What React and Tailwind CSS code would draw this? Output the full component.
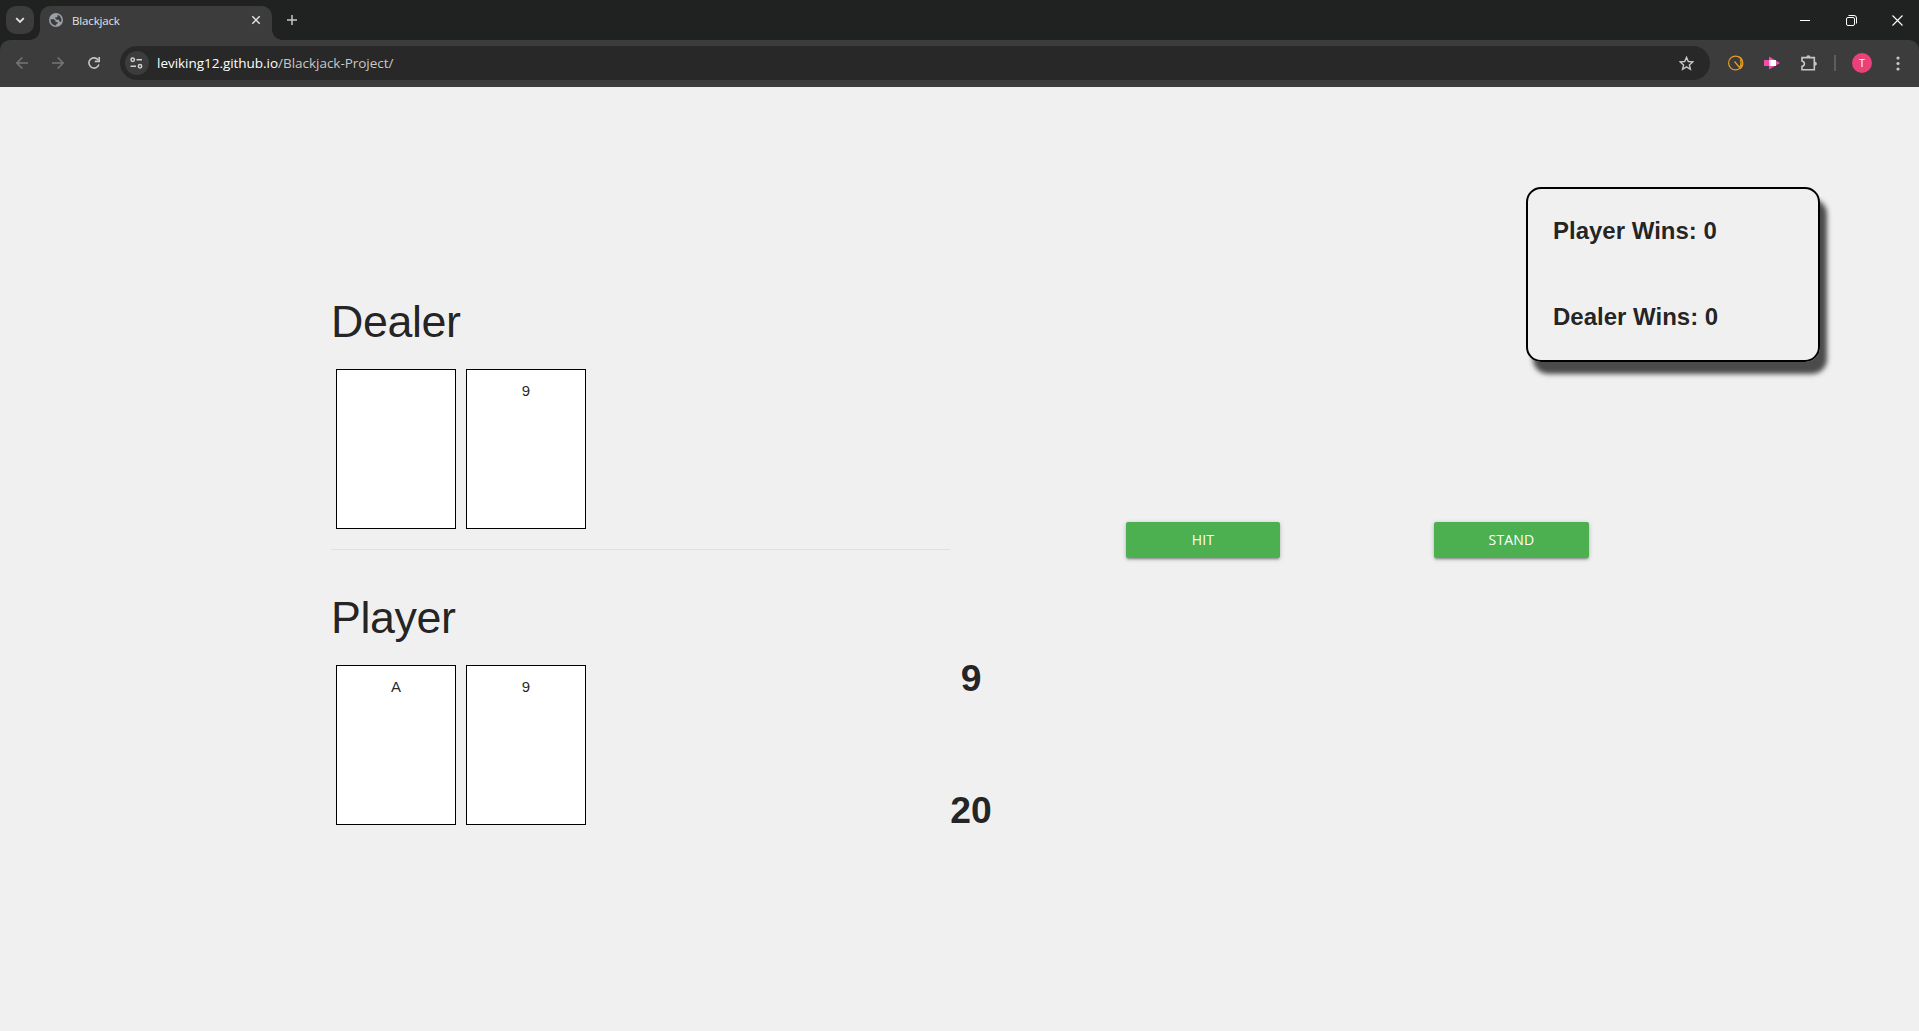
function GlobeIcon() {
  return (
    <svg className="size-[14px] shrink-0" viewBox="0 0 14 14">
      <circle cx="7" cy="7" r="7" fill="#9aa0a8" />
      <path d="M8.600 1.700C10.800 2.300 12.400 4.400 12.400 7c0 .7-.1 1.300-.3 1.900L10.300 8.200 9.900 6.800H7.700L6.300 5.600V4.300h1.900L8.600 3z" fill="#3c3c3c" />
      <path d="M1.600 6.200h3.200l1.700 1.400v1.300h2.100v1.500l-1.200.5-.2 1.500C4 12.500 1.500 10 1.500 7z" fill="#3c3c3c" />
    </svg>
  );
}

function ArrowIcon({ flip }) {
  return (
    <svg className={flip ? "size-[12px] shrink-0 rotate-180" : "size-[12px] shrink-0"} viewBox="0 0 12 12" fill="none" stroke="#767676" strokeWidth="1.5">
      <path d="M12 6H1M6.300.5L.9 6l5.400 5.500" />
    </svg>
  );
}

function Chrome() {
  return (
    <header className="h-[87px] bg-[#202221]">
      <div className="flex h-10 items-start">
        <div className="ml-[6px] mt-[6px] flex size-7 shrink-0 items-center justify-center rounded-[10px] bg-[#3c3c3c]">
          <svg className="size-[10px]" viewBox="0 0 10 10" fill="none" stroke="#e3e3e3" strokeWidth="1.8"><path d="M1.200 3.200L5 7l3.800-3.800" /></svg>
        </div>
        <div className="mt-[30px] ml-[-4px] size-[10px] shrink-0 bg-[radial-gradient(circle_at_0_0,transparent_9.500px,#3c3c3c_10px)]" />
        <div className="mt-[6px] flex h-[34px] w-[232px] shrink-0 items-center rounded-t-[10px] bg-[#3c3c3c] pb-[6px] pl-[9px] pr-[11px]">
          <GlobeIcon />
          <span className="ml-[9px] mt-[2px] flex-1 font-['Open_Sans',sans-serif] text-[11.500px] leading-4 tracking-[-0.15px] text-[#e3e3e3]">Blackjack</span>
          <svg className="size-[10px]" viewBox="0 0 10 10" stroke="#e3e3e3" strokeWidth="1.500"><path d="M1.300 1.300l7.400 7.400M8.700 1.300L1.300 8.700" /></svg>
        </div>
        <div className="mt-[30px] size-[10px] shrink-0 bg-[radial-gradient(circle_at_100%_0,transparent_9.500px,#3c3c3c_10px)]" />
        <svg className="ml-[5px] mt-[15px] size-[10px]" viewBox="0 0 10 10" stroke="#c7c7c7" strokeWidth="1.500"><path d="M5 0v10M0 5h10" /></svg>
        <div className="ml-auto mr-[16px] mt-[14px] flex items-center">
          <svg className="h-[12px] w-[10px]" viewBox="0 0 10 12" stroke="#fff" strokeWidth="1"><path d="M0 6.500h10" /></svg>
          <svg className="ml-[36px] size-[11px]" viewBox="0 0 11 11" fill="none" stroke="#fff"><rect x=".5" y="2.500" width="8" height="8" rx="1.500" /><path d="M2.500.5H8A2.500 2.500 0 0 1 10.500 3v5.500" /></svg>
          <svg className="ml-[35px] size-[11px]" viewBox="0 0 11 11" stroke="#fff" strokeWidth="1.100"><path d="M.5.5l10 10M10.500.5l-10 10" /></svg>
        </div>
      </div>
      <div className="flex h-[47px] items-center rounded-t-[10px] bg-[#3c3c3c] pb-[1px]">
        <div className="ml-4 flex w-[104px] items-center">
          <ArrowIcon />
          <div className="ml-6 flex"><ArrowIcon flip /></div>
          <svg className="ml-6 size-[12px]" viewBox="0 0 12 12" fill="none" stroke="#c7c7c7" strokeWidth="1.600"><path d="M10.900 7.500A5.100 5.100 0 1 1 10.200 3" /><path d="M11.200 0v4.400H6.800" /></svg>
        </div>
        <div className="flex h-[34px] w-[1590px] items-center rounded-full bg-[#282828] pl-[5px] pr-[16px]">
          <div className="flex size-6 items-center justify-center rounded-full bg-[#3c3c3c]">
            <svg className="mr-px h-[12px] w-[13px]" viewBox="0 0 13 12" fill="none" stroke="#d0d0d0" strokeWidth="1.500"><circle cx="2.700" cy="2.800" r="1.700" /><path d="M6.500 2.800H12M.5 9.200H6" /><circle cx="10" cy="9.200" r="1.700" /></svg>
          </div>
          <span className="ml-2 font-['Open_Sans',sans-serif] text-[13.500px] leading-5 tracking-[-0.03px] text-white">leviking12.github.io<span className="text-[#c7c7c7]">/Blackjack-Project/</span></span>
          <svg className="ml-auto size-[15px]" viewBox="0 0 15 15" fill="none" stroke="#c7c7c7" strokeWidth="1.400"><path d="M7.500 1.400l1.800 4.100 4.500.4-3.400 3 1 4.400-3.900-2.400-3.900 2.400 1-4.400-3.400-3 4.500-.4z" /></svg>
        </div>
        <svg className="ml-[18px] size-[16px]" viewBox="0 0 16 16" fill="none" stroke="#e79d25" strokeWidth="1.200"><circle cx="7.500" cy="8" r="6.900" /><path d="M11 1.700c4.600 2.200 5 9.300 1 12M6.500 6.500l5 6M12.300 4.500c1 2.500.8 5.500-.8 8" /></svg>
        <svg className="ml-[20px] h-[14px] w-[16px]" viewBox="0 0 16 14"><path d="M0 4h5V.5L16 7 5 13.500V10H0z" fill="#ef4fae" /><path d="M5 4h7v6H5z" fill="#fff" /><path d="M5 4h1.500v6H5z" fill="#f9b5dc" /></svg>
        <svg className="ml-[21px] size-[16px]" viewBox="0 0 16 16" fill="none" stroke="#c7c7c7" strokeWidth="1.600"><path d="M1 2.600h12.300v12.200H1v-3.400c3.200-.6 3.200-4.800 0-5.400z" /><path d="M5.800 2a1.600 1.600 0 0 1 3.200 0zM14 7.100a1.600 1.600 0 0 1 0 3.200z" fill="#c7c7c7" strokeWidth=".6" /></svg>
        <div className="ml-[17px] h-4 w-[2px] bg-[#5d5d5d]" />
        <div className="ml-4 flex size-5 items-center justify-center rounded-full bg-[#ec407a] font-['Roboto',sans-serif] text-[10px] text-white">T</div>
        <svg className="ml-[24px] h-[15px] w-[4px]" viewBox="0 0 4 15" fill="#c7c7c7"><circle cx="2" cy="2" r="1.600" /><circle cx="2" cy="7.500" r="1.600" /><circle cx="2" cy="13" r="1.600" /></svg>
      </div>
    </header>
  );
}

function Hand({ name, cards }) {
  return (
    <section>
      <h1 className="text-[44.800px] leading-[50px] tracking-[-0.4px]">{name}</h1>
      <div className="ml-[5px] mt-[23px] flex gap-[10px]">
        {cards.map((card, i) => (
          <div key={i} className="h-40 w-[120px] border border-black bg-white pt-[10px] text-center text-[15px] leading-[21px]">{card}</div>
        ))}
      </div>
    </section>
  );
}

function ActionButton({ children }) {
  return (
    <button className="h-9 rounded-[2px] bg-[#4caf50] font-['Open_Sans',sans-serif] text-[14px] leading-9 tracking-[0.2px] text-white shadow-[0_2px_2px_0_rgba(0,0,0,0.14),0_3px_1px_-2px_rgba(0,0,0,0.12),0_1px_5px_0_rgba(0,0,0,0.2)]">{children}</button>
  );
}

export default function App() {
  return (
    <div className="h-[1031px] w-[1919px] overflow-hidden bg-[#f0f0f0] font-['Liberation_Sans',Arial,sans-serif] text-[rgba(0,0,0,0.87)]">
      <Chrome />
      <main className="flex h-[944px] items-start">
        <div className="ml-[331px] mt-[209px] w-[619px]">
          <Hand name="Dealer" cards={["", "9"]} />
          <hr className="mb-[42px] mt-5 border-t border-[#e0e0e0]" />
          <Hand name="Player" cards={["A", "9"]} />
        </div>
        <div className="mt-[569px] flex w-[42px] flex-col items-center gap-[88px] text-[37.300px] font-bold leading-[44px]">
          <span>9</span>
          <span>20</span>
        </div>
        <div className="ml-[134px] mt-[435px] grid grid-cols-[154px_155px] gap-[154px]">
          <ActionButton>HIT</ActionButton>
          <ActionButton>STAND</ActionButton>
        </div>
        <aside className="-ml-[63px] mt-[100px] flex h-[175px] w-[294px] flex-col gap-[58px] rounded-[15px] border-2 border-black pl-[25px] pt-[28px] text-[24px] font-bold leading-7 shadow-[7px_12px_5px_rgba(0,0,0,0.69)]">
          <p>Player Wins: 0</p>
          <p>Dealer Wins: 0</p>
        </aside>
      </main>
    </div>
  );
}
